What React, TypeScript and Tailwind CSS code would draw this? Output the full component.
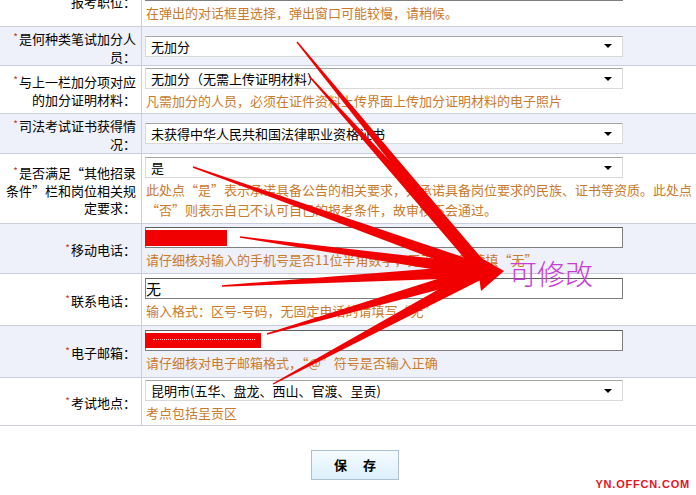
import React from 'react';

type Row = {
  label: React.ReactNode;
  kind: 'select' | 'input';
  value?: string;
  hint?: string[];
  h: string;
  bg: string;
  redact?: 'phone' | 'mail';
};

const rows: Row[] = [
  { label: '报考职位：', kind: 'input', hint: ['在弹出的对话框里选择，弹出窗口可能较慢，请稍候。'], h: 'h-[51px] -mt-[24px]', bg: 'bg-white' },
  { label: <>是何种类笔试加分人<br />员：</>, kind: 'select', value: '无加分', h: 'h-[39px]', bg: 'bg-[#eef1f9]' },
  {
    label: <>与上一栏加分项对应<br />的加分证明材料：</>,
    kind: 'select',
    value: '无加分（无需上传证明材料）',
    hint: ['凡需加分的人员，必须在证件资料上传界面上传加分证明材料的电子照片'],
    h: 'h-[48px]',
    bg: 'bg-white',
  },
  { label: <>司法考试证书获得情<br />况：</>, kind: 'select', value: '未获得中华人民共和国法律职业资格证书', h: 'h-[40px]', bg: 'bg-[#eef1f9]' },
  {
    label: <>是否满足“其他招录<br />条件”栏和岗位相关规<br />定要求：</>,
    kind: 'select',
    value: '是',
    hint: [
      '此处点“是”表示承诺具备公告的相关要求，并承诺具备岗位要求的民族、证书等资质。此处点',
      '“否”则表示自己不认可自己的报考条件，故审核不会通过。',
    ],
    h: 'h-[70px]',
    bg: 'bg-white',
  },
  { label: '移动电话：', kind: 'input', redact: 'phone', hint: ['请仔细核对输入的手机号是否11位半角数字，无手机号码请填“无”'], h: 'h-[50px]', bg: 'bg-[#eef1f9]' },
  { label: '联系电话：', kind: 'input', value: '无', hint: ['输入格式：区号-号码，无固定电话的请填写“无”'], h: 'h-[52px]', bg: 'bg-white' },
  { label: '电子邮箱：', kind: 'input', redact: 'mail', hint: ['请仔细核对电子邮箱格式，“@”符号是否输入正确'], h: 'h-[52px]', bg: 'bg-[#eef1f9]' },
  { label: '考试地点：', kind: 'select', value: '昆明市(五华、盘龙、西山、官渡、呈贡)', hint: ['考点包括呈贡区'], h: 'h-[48px]', bg: 'bg-white' },
];

// red strokes drawn over the form, all pointing at the same spot
const starts: [number, number][] = [
  [297, 42],
  [309, 76],
  [352, 124],
  [193, 167],
  [240, 237],
  [222, 286],
  [267, 334],
  [273, 384],
];
const tip: [number, number] = [484, 271];

function wedge(s: [number, number], e: [number, number], w1: number, w2: number) {
  const dx = e[0] - s[0];
  const dy = e[1] - s[1];
  const len = Math.hypot(dx, dy);
  const nx = -dy / len;
  const ny = dx / len;
  const pts = [
    [s[0] + nx * w1, s[1] + ny * w1],
    [e[0] + nx * w2, e[1] + ny * w2],
    [e[0] - nx * w2, e[1] - ny * w2],
    [s[0] - nx * w1, s[1] - ny * w1],
  ];
  return pts.map((p) => p.join(',')).join(' ');
}

function Field({ row }: { row: Row }) {
  if (row.kind === 'select') {
    return (
      <div className="relative flex h-[21px] w-[478px] items-center border border-[#d9d9d9] border-t-[#a6a6a6] bg-white pl-[5px] pr-[10px] text-[13px] leading-[19px] text-black">
        <span className="flex-1 whitespace-nowrap">{row.value}</span>
        <span className="h-0 w-0 border-l-[4px] border-r-[4px] border-t-[4px] border-l-transparent border-r-transparent border-t-black" />
      </div>
    );
  }
  return (
    <div className="relative flex h-[21px] w-[478px] items-center border border-[#7f7f7f] border-t-[#5f5f5f] bg-white text-[15px] leading-[19px] text-black">
      {row.value}
      {row.redact === 'phone' && <div className="absolute -left-[1px] top-[2px] h-[16px] w-[82px] bg-[#f00000]" />}
      {row.redact === 'mail' && (
        <div className="absolute -left-[1px] top-[2px] h-[15px] w-[116px] bg-[#f00000]">
          <div className="ml-[8px] mt-[6px] w-[102px] border-t border-dotted border-[#ffc8c8]" />
        </div>
      )}
    </div>
  );
}

export default function App() {
  return (
    <div className="relative h-[495px] w-[696px] overflow-hidden bg-white font-['Noto_Sans_CJK_SC',sans-serif]">
      <div>
        {rows.map((row, i) => (
          <div key={i} className={`flex border-b border-[#c9ced8] ${row.h} ${row.bg}`}>
            <div className="flex w-[142px] shrink-0 items-center justify-end border-r border-[#c9ced8] pr-[5px] text-right text-[13px] leading-[17px] text-black">
              <div className="whitespace-nowrap pt-[2px]">
                <span className="relative -top-[3px] mr-[1px] text-[10px] text-[#c0392b]">*</span>
                {row.label}
              </div>
            </div>
            <div className="flex flex-1 flex-col justify-center pl-[3px]">
              <Field row={row} />
              {row.hint && (
                <div className="mt-[2px] pl-[1px] text-[13px] leading-[20px] whitespace-nowrap text-[#c97a2c]">
                  {row.hint.map((t, j) => (
                    <div key={j}>{t}</div>
                  ))}
                </div>
              )}
            </div>
          </div>
        ))}
      </div>

      <div className="mt-[24px] pl-[311px]">
        <button className="flex h-[30px] w-[88px] items-center justify-center gap-[16px] border border-[#aebfd0] bg-linear-to-b from-[#f5fbff] to-[#dcf0fc] text-[13px] font-bold text-black">
          <span>保</span>
          <span>存</span>
        </button>
      </div>

      <div className="absolute bottom-[3px] right-[6px] font-['Liberation_Sans',sans-serif] text-[11px] font-black tracking-[0.8px] text-[#e3141e]">
        YN.OFFCN.COM
      </div>

      <svg className="pointer-events-none absolute inset-0" width="696" height="495" viewBox="0 0 696 495">
        {starts.map((s, i) => (
          <polygon key={i} points={wedge(s, tip, 0.7, 6.5)} fill="#f00000" />
        ))}
        <polygon points="504,271 476,255 481,291" fill="#f00000" />
      </svg>

      <div className="absolute left-[509px] top-[259px] text-[28px] font-light leading-none text-[#c93bd8]">可修改</div>
    </div>
  );
}
